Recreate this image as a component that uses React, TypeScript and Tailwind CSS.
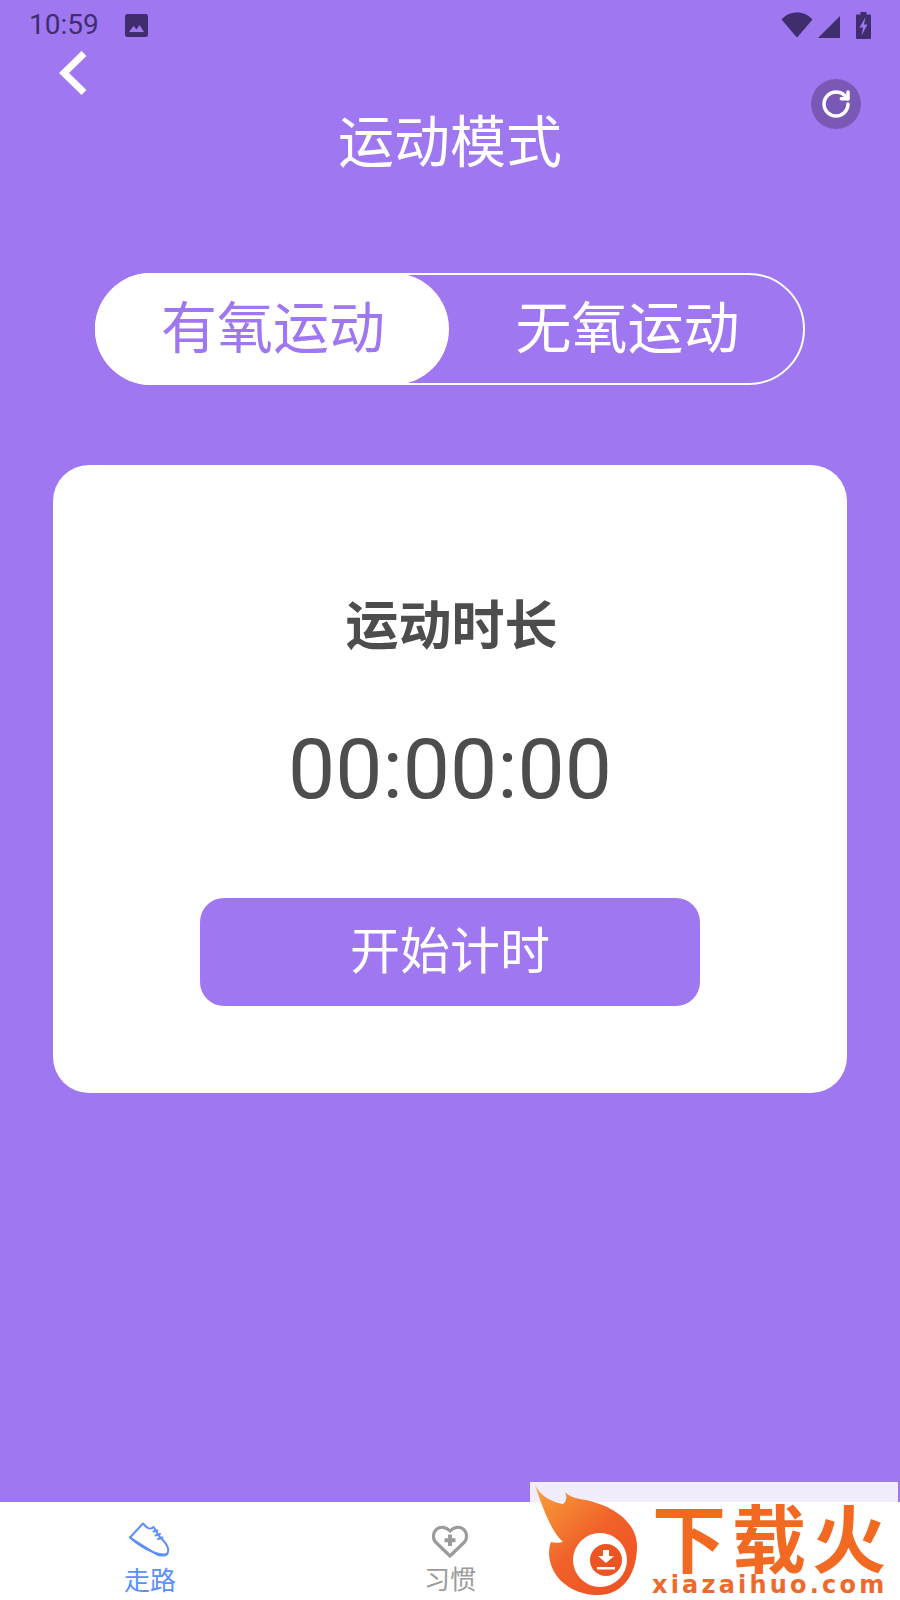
import React from 'react'
import { RotateCw } from 'lucide-react'

const cjk = "font-['Roboto','Noto_Sans_CJK_SC',sans-serif]"

function StatusIcons(): React.JSX.Element {
  return (
    <div className="flex items-center text-[#402d6e]">
      <svg width="32" height="26" viewBox="0 0 32 26">
        <path d="M0.500 7.500C4.500 3 10 0.500 16 0.500S27.500 3 31.500 7.500L17 24.500a1.300 1.300 0 0 1-2 0Z" fill="currentColor" />
      </svg>
      <svg width="23" height="23" viewBox="0 0 23 23" className="ml-[5px] mt-[3px]">
        <path d="M0 23 22 1v22Z" fill="currentColor" />
      </svg>
      <svg width="15" height="27" viewBox="0 0 15 27" className="ml-[15px] mr-[29px]">
        <path d="M4.500 0h6v2.500H14a1 1 0 0 1 1 1V26a1 1 0 0 1-1 1H1a1 1 0 0 1-1-1V3.500a1 1 0 0 1 1-1h3.500Z" fill="currentColor" />
        <path d="M9.500 5 3.500 15.500h3.500l-1.500 8 6-11H8Z" fill="#9f77f1" />
      </svg>
    </div>
  )
}

function ShoeIcon(): React.JSX.Element {
  return (
    <svg width="42" height="36" viewBox="0 0 42 36" fill="none" stroke="#5b8ff9" strokeWidth="2" strokeLinejoin="round" strokeLinecap="round">
      <path d="M1 15.500 14 1.500l3.500 3.500c2 2 5 2 7 0 2 2.500 3.500 6 6 9.500 2.500 3 7.500 7 8.500 12 0.500 2.500 0 5-2 6.500-3 1-7 0.500-10-1Z" />
      <path d="M1 15.500c6 5.500 14 11 24 15 4 1.500 9 3 13 1.500" />
      <path d="M24.500 9.500l4-1M26.500 13.500l4.500-1.500M29 17l4.500-1.500" />
    </svg>
  )
}

function HeartPlusIcon(): React.JSX.Element {
  return (
    <svg width="36" height="34" viewBox="0 0 36 34" fill="none">
      <path d="M18 31 3.500 17C0.500 13.500 0.800 7.500 4.500 4.300 8.500 1 14 1.800 18 6c4-4.200 9.500-5 13.500-1.700 3.700 3.200 4 9.200 1 12.700Z" stroke="#9b9b9b" strokeWidth="3.200" strokeLinejoin="round" />
      <path d="M18 9.500v11.500M12.500 15.200h11" stroke="#9b9b9b" strokeWidth="4" />
    </svg>
  )
}

// site badge pinned over the tab bar's bottom right corner
function DownloadBadge(): React.JSX.Element {
  return (
    <div className="absolute right-[2px] bottom-0 w-[368px] h-[118px] bg-white">
      <div className="h-[20px] bg-[#f1edfd]" />
      <svg width="112" height="118" viewBox="0 0 112 118" className="absolute left-0 top-0">
        <defs>
          <linearGradient id="flame" x1="0" y1="0" x2="0.800" y2="1">
            <stop offset="0" stopColor="#f9a23a" />
            <stop offset="0.550" stopColor="#f0622a" />
            <stop offset="1" stopColor="#ee5322" />
          </linearGradient>
        </defs>
        <path d="M5 3C9 12 20 20 33 22C37 19 37 14 35 10C39 14 44 16 50 17C82 22 108 40 107 66C106 96 90 114 66 113C40 112 20 95 19 72C19 66 20 62 21 60C24 61 29 61 33 60C22 50 14 30 5 3Z" fill="url(#flame)" />
        <circle cx="70" cy="78" r="27" fill="#fff" />
        <circle cx="76" cy="78" r="16" fill="#ee5322" />
        <path d="M73 68h6v6h5l-8 7-8-7h5Z" fill="#fff" />
        <path d="M67 85h18v2.500H67Z" fill="#fff" />
      </svg>
      <div className="absolute left-[122px] top-[16px] text-[74px] leading-[74px] font-bold text-[#f26a22] tracking-[6px] whitespace-nowrap font-['Noto_Sans_CJK_SC',sans-serif]">
        下载火
      </div>
      <div className="absolute left-[122px] top-[92px] text-[24px] leading-[22px] font-bold tracking-[3.200px] text-[#ee6a2c] font-['DejaVu_Sans',sans-serif] whitespace-nowrap">
        xiazaihuo.com
      </div>
    </div>
  )
}

export default function App(): React.JSX.Element {
  return (
    <div className={`relative w-[900px] h-[1600px] flex flex-col bg-[#9f77f1] overflow-hidden ${cjk}`}>
      <div className="h-[48px] flex items-center justify-between pl-[29px] pt-[2px]">
        <div className="flex items-center gap-[26px] text-[#402d6e]">
          <span className="text-[28px] leading-[48px]">10:59</span>
          <svg width="23" height="23" viewBox="0 0 23 23">
            <rect width="23" height="23" rx="2.500" fill="currentColor" />
            <path d="M4 18l4.500-6 3 3.500 3-4.500 4.500 7Z" fill="#9f77f1" />
          </svg>
        </div>
        <StatusIcons />
      </div>

      <div className="grid grid-cols-[1fr_auto_1fr] h-[125px]">
        <div className="pl-[58px] pt-[3px]">
          <svg width="30" height="44" viewBox="0 0 30 44" fill="none" stroke="#fff" strokeWidth="7">
            <path d="M26 2.500 6 22l20 19.500" />
          </svg>
        </div>
        <div className="pt-[64px] text-[56px] leading-[62px] text-white">运动模式</div>
        <div className="flex justify-end pt-[31px] pr-[39px]">
          <div className="w-[50px] h-[50px] rounded-full bg-[#7a58b5] flex items-center justify-center">
            <RotateCw size={32} strokeWidth={2.600} className="text-white" />
          </div>
        </div>
      </div>

      <div className="mx-[95px] mt-[100px] h-[112px] rounded-full border-2 border-white flex items-center text-[56px]">
        <div className="-ml-[2px] pl-[2px] w-[354px] h-[112px] rounded-full bg-white text-[#9f77f1] flex items-center justify-center">有氧运动</div>
        <div className="flex-1 pl-[3px] flex items-center justify-center text-white">无氧运动</div>
      </div>

      <div className="mx-[53px] mt-[80px] h-[628px] rounded-[36px] bg-white flex flex-col items-center text-[#4d4d4d]">
        <div className="mt-[128px] pl-[3px] text-[53px] leading-[68px] font-bold">运动时长</div>
        <div className="mt-[59px] text-[84px] leading-[100px]">00:00:00</div>
        <div className="mt-[78px] w-[500px] h-[108px] rounded-[24px] bg-[#9f77f1] text-white text-[50px] flex items-center justify-center">开始计时</div>
      </div>

      <div className="mt-auto h-[98px] bg-white flex">
        <div className="w-[300px] flex flex-col items-center pt-[20px]">
          <ShoeIcon />
          <span className="mt-[7px] text-[26px] leading-[32px] text-[#5b8ff9]">走路</span>
        </div>
        <div className="w-[300px] flex flex-col items-center pt-[23px]">
          <HeartPlusIcon />
          <span className="mt-[5px] text-[26px] leading-[32px] text-[#9b9b9b]">习惯</span>
        </div>
      </div>

      <DownloadBadge />
    </div>
  )
}
